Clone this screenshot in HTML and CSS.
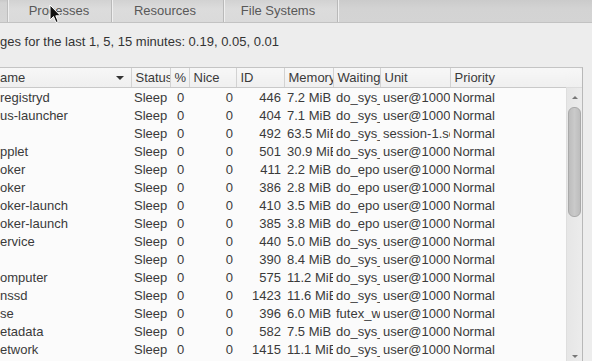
FILE: index.html
```html
<!DOCTYPE html>
<html>
<head>
<meta charset="utf-8">
<link rel="stylesheet" href="styles.css">
</head>
<body>
<div class="window">
  <div class="tabbar">
    <div class="tab-lead"></div>
    <div class="tab tab-active">Processes</div>
    <div class="tab tab-res">Resources</div>
    <div class="tab tab-fs">File Systems</div>
    <div class="tab-rest"></div>
  </div>
  <div class="loadavg">ges for the last 1, 5, 15 minutes: 0.19, 0.05, 0.01</div>
  <div class="sw">
    <div class="tree">
      <table class="grid">
        <colgroup>
          <col class="c-name"><col class="c-status"><col class="c-pct"><col class="c-nice"><col class="c-id"><col class="c-mem"><col class="c-wait"><col class="c-unit"><col class="c-prio">
        </colgroup>
        <thead>
          <tr>
            <th class="h-name"><span>ame</span><span class="sort"></span></th>
            <th>Status</th><th>%</th><th>Nice</th><th>ID</th><th>Memory</th><th>Waiting</th><th class="h-unit">Unit</th><th>Priority</th>
          </tr>
        </thead>
        <tbody>
          <tr><td class="n">registryd</td><td>Sleep</td><td class="p">0</td><td class="r">0</td><td class="r">446</td><td>7.2 MiB</td><td>do_sys_poll</td><td class="u">user@1000</td><td>Normal</td></tr>
          <tr><td class="n">us-launcher</td><td>Sleep</td><td class="p">0</td><td class="r">0</td><td class="r">404</td><td>7.1 MiB</td><td>do_sys_poll</td><td class="u">user@1000</td><td>Normal</td></tr>
          <tr><td class="n"></td><td>Sleep</td><td class="p">0</td><td class="r">0</td><td class="r">492</td><td>63.5 MiB</td><td>do_sys_poll</td><td class="u">session-1.scope</td><td>Normal</td></tr>
          <tr><td class="n">pplet</td><td>Sleep</td><td class="p">0</td><td class="r">0</td><td class="r">501</td><td>30.9 MiB</td><td>do_sys_poll</td><td class="u">user@1000</td><td>Normal</td></tr>
          <tr><td class="n">oker</td><td>Sleep</td><td class="p">0</td><td class="r">0</td><td class="r">411</td><td>2.2 MiB</td><td>do_epoll_wait</td><td class="u">user@1000</td><td>Normal</td></tr>
          <tr><td class="n">oker</td><td>Sleep</td><td class="p">0</td><td class="r">0</td><td class="r">386</td><td>2.8 MiB</td><td>do_epoll_wait</td><td class="u">user@1000</td><td>Normal</td></tr>
          <tr><td class="n">oker-launch</td><td>Sleep</td><td class="p">0</td><td class="r">0</td><td class="r">410</td><td>3.5 MiB</td><td>do_epoll_wait</td><td class="u">user@1000</td><td>Normal</td></tr>
          <tr><td class="n">oker-launch</td><td>Sleep</td><td class="p">0</td><td class="r">0</td><td class="r">385</td><td>3.8 MiB</td><td>do_epoll_wait</td><td class="u">user@1000</td><td>Normal</td></tr>
          <tr><td class="n">ervice</td><td>Sleep</td><td class="p">0</td><td class="r">0</td><td class="r">440</td><td>5.0 MiB</td><td>do_sys_poll</td><td class="u">user@1000</td><td>Normal</td></tr>
          <tr><td class="n"></td><td>Sleep</td><td class="p">0</td><td class="r">0</td><td class="r">390</td><td>8.4 MiB</td><td>do_sys_poll</td><td class="u">user@1000</td><td>Normal</td></tr>
          <tr><td class="n">omputer</td><td>Sleep</td><td class="p">0</td><td class="r">0</td><td class="r">575</td><td>11.2 MiB</td><td>do_sys_poll</td><td class="u">user@1000</td><td>Normal</td></tr>
          <tr><td class="n">nssd</td><td>Sleep</td><td class="p">0</td><td class="r">0</td><td class="r">1423</td><td>11.6 MiB</td><td>do_sys_poll</td><td class="u">user@1000</td><td>Normal</td></tr>
          <tr><td class="n">se</td><td>Sleep</td><td class="p">0</td><td class="r">0</td><td class="r">396</td><td>6.0 MiB</td><td>futex_wait_queue</td><td class="u">user@1000</td><td>Normal</td></tr>
          <tr><td class="n">etadata</td><td>Sleep</td><td class="p">0</td><td class="r">0</td><td class="r">582</td><td>7.5 MiB</td><td>do_sys_poll</td><td class="u">user@1000</td><td>Normal</td></tr>
          <tr><td class="n">etwork</td><td>Sleep</td><td class="p">0</td><td class="r">0</td><td class="r">1415</td><td>11.1 MiB</td><td>do_sys_poll</td><td class="u">user@1000</td><td>Normal</td></tr>
        </tbody>
      </table>
    </div>
    <div class="vscroll">
      <div class="vs-head"></div>
      <div class="vs-track">
        <div class="vs-arrow vs-up"></div>
        <div class="vs-thumb"></div>
        <div class="vs-fill"></div>
        <div class="vs-arrow vs-down"></div>
      </div>
    </div>
  </div>
  <svg class="cursor" width="13" height="20" viewBox="0 0 13 20">
    <path d="M1 1 L1 16 L4.5 12.5 L7 18.5 L9.2 17.6 L6.8 11.8 L11.5 11.8 Z" fill="#111" stroke="#fff" stroke-width="1" stroke-linejoin="round"/>
  </svg>
</div>
</body>
</html>
```
FILE: styles.css
```css
html, body {
  margin: 0;
  padding: 0;
}
body {
  background: #ededed;
  font-family: "Liberation Sans", Arial, sans-serif;
  font-size: 13px;
  color: #3b3b3b;
}
.window {
  position: relative;
  width: 592px;
  height: 361px;
  overflow: hidden;
  background: #ededed;
}
.tabbar {
  display: flex;
  height: 23px;
  background: linear-gradient(#c9c9c9 0px, #d3d3d3 3px, #d6d6d6 100%);
  border-bottom: 1px solid #c2c2c2;
  box-sizing: border-box;
}
.tab-lead {
  width: 8px;
  border-right: 1px solid #bdbdbd;
  box-sizing: border-box;
}
.tab {
  box-sizing: border-box;
  height: 22px;
  line-height: 22px;
  text-align: center;
  color: #585858;
  background: linear-gradient(#d2d2d2, #dcdcdc 40%, #dadada);
  border-left: 1px solid #efefef;
  border-right: 1px solid #b9b9b9;
}
.tab-active { width: 104px; padding-right: 2px; }
.tab-res { width: 112px; padding-right: 6px; }
.tab-fs { width: 114px; padding-right: 6px; }
.tab-rest {
  flex: 1;
  border-left: 1px solid #efefef;
  background: linear-gradient(#cbcbcb, #d3d3d3 40%, #d4d4d4);
}
.loadavg {
  margin-top: 11px;
  height: 16px;
  line-height: 16px;
  white-space: nowrap;
  color: #333;
}
.sw {
  display: flex;
  margin-top: 17px;
  width: 583px;
  height: 300px;
  border-top: 1px solid #c4c4c4;
  border-right: 1px solid #b8b8b8;
  box-sizing: border-box;
}
.tree {
  width: 566px;
  background: #fbfbfb;
  overflow: hidden;
}
.grid {
  border-collapse: collapse;
  table-layout: fixed;
  width: 566px;
}
.c-name { width: 131px; }
.c-status { width: 39px; }
.c-pct { width: 19px; }
.c-nice { width: 47px; }
.c-id { width: 48px; }
.c-mem { width: 49px; }
.c-wait { width: 47px; }
.c-unit { width: 70px; }
.c-prio { width: 116px; }
.grid th {
  height: 19px;
  padding: 0 0 0 4px;
  text-align: left;
  font-weight: normal;
  color: #3a3a3a;
  background: linear-gradient(#f7f7f7, #efefef);
  border-left: 1px solid #d2d2d2;
  border-bottom: 1px solid #c9c9c9;
  white-space: nowrap;
  overflow: hidden;
  text-overflow: clip;
}
.grid th.h-name {
  border-left: none;
  padding-left: 0;
  position: relative;
}
.grid th.h-unit { padding-left: 4px; }
.sort {
  position: absolute;
  left: 116px;
  top: 8px;
  width: 0;
  height: 0;
  border-left: 4px solid transparent;
  border-right: 4px solid transparent;
  border-top: 4px solid #333;
}
.grid td {
  height: 18px;
  padding: 0 0 0 3px;
  white-space: nowrap;
  overflow: hidden;
  text-overflow: clip;
  color: #3a3a3a;
}
.grid td.n { padding-left: 0; }
.grid td.p { padding-left: 7px; }
.grid td.r { text-align: right; padding: 0 3px 0 0; }
.grid td.u { padding-left: 3px; }
.vscroll {
  width: 16px;
  display: flex;
  flex-direction: column;
}
.vs-head {
  height: 20px;
  background: linear-gradient(#f7f7f7, #efefef);
  border-bottom: 1px solid #dcdcdc;
  border-top-right-radius: 4px;
  box-sizing: border-box;
}
.vs-track {
  flex: 1;
  display: flex;
  flex-direction: column;
  align-items: center;
  background: linear-gradient(90deg, #e6e6e6, #ececec);
  border-left: 1px solid #dedede;
}
.vs-arrow {
  width: 0;
  height: 0;
  border-left: 3px solid transparent;
  border-right: 3px solid transparent;
}
.vs-up {
  margin-top: 8px;
  border-bottom: 3px solid #777;
}
.vs-thumb {
  margin-top: 8px;
  width: 13px;
  height: 110px;
  border-radius: 6px;
  border: 1px solid #a9a9a9;
  box-sizing: border-box;
  background: linear-gradient(90deg, #bdbdbd, #cacaca 50%, #bdbdbd);
}
.vs-fill { flex: 1; }
.vs-down {
  margin-bottom: 9px;
  border-top: 3px solid #777;
}
.cursor {
  position: absolute;
  left: 49px;
  top: 4px;
}
```
